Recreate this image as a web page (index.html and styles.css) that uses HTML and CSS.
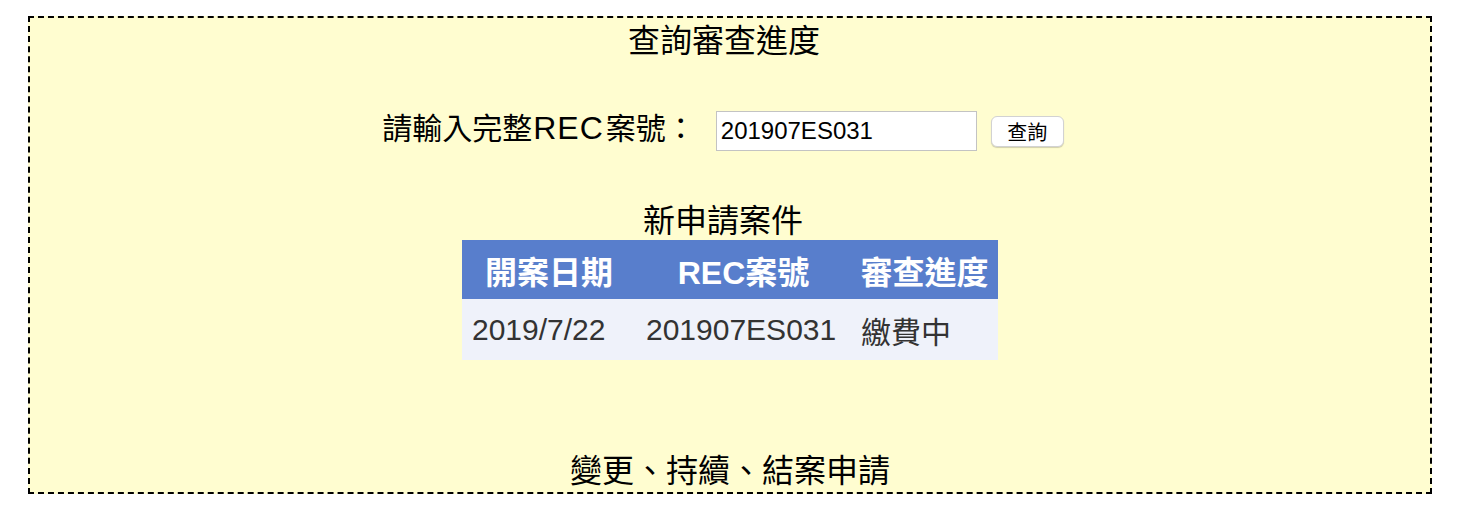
FILE: index.html
```html
<!DOCTYPE html>
<html lang="zh-Hant">
<head>
<meta charset="utf-8">
<title>查詢審查進度</title>
<link rel="stylesheet" href="styles.css">
</head>
<body>
<div class="panel">
  <div class="title">查詢審查進度</div>
  <form class="search-row">
    <label class="search-label" for="rec">請輸入完整<span class="latin">REC</span>案號：</label>
    <input class="search-input" id="rec" type="text" value="201907ES031">
    <button class="search-btn" type="button">查詢</button>
  </form>
  <div class="subtitle">新申請案件</div>
  <table class="cases">
    <colgroup>
      <col class="c-date">
      <col class="c-no">
      <col class="c-status">
    </colgroup>
    <thead>
      <tr><th>開案日期</th><th>REC案號</th><th>審查進度</th></tr>
    </thead>
    <tbody>
      <tr><td>2019/7/22</td><td>201907ES031</td><td>繳費中</td></tr>
    </tbody>
  </table>
  <div class="section-title">變更、持續、結案申請</div>
</div>
</body>
</html>
```

FILE: styles.css
```css
html, body {
  margin: 0;
  padding: 0;
  background: #ffffff;
}

body {
  padding: 16px 30px 0 28px;
  font-family: "Liberation Sans", "Noto Sans CJK TC", sans-serif;
  color: #000;
}

.panel {
  box-sizing: border-box;
  height: 478px;
  border: 2px dashed #000;
  background: #fffdd0;
  display: flex;
  flex-direction: column;
  align-items: center;
}

.title {
  font-size: 32px;
  line-height: 46px;
  padding-right: 12px;
}

.search-row {
  margin: 47px 0 0 0;
  padding-right: 14px;
  display: flex;
  align-items: center;
  height: 40px;
}

.search-label {
  font-size: 30px;
  line-height: 40px;
  margin-bottom: 5px;
  margin-right: 20px;
}

.latin {
  font-size: 32px;
  letter-spacing: 1px;
  margin: 0 2px 0 1px;
}

.search-input {
  box-sizing: border-box;
  width: 261px;
  height: 40px;
  margin: 0;
  padding: 0 4px;
  border: 1px solid #c3c3c3;
  background: #fff;
  font-family: "Liberation Sans", sans-serif;
  font-size: 24px;
  color: #000;
  outline: none;
}

.search-btn {
  box-sizing: border-box;
  width: 73px;
  height: 31px;
  margin: 0 0 0 14px;
  padding: 0;
  border: 1px solid #d2d2d2;
  border-radius: 6px;
  background: #fff;
  box-shadow: 0 1px 1px rgba(0, 0, 0, 0.18);
  font-family: "Noto Sans CJK TC", sans-serif;
  font-size: 20px;
  line-height: 29px;
  color: #000;
}

.subtitle {
  margin-top: 51px;
  font-size: 32px;
  line-height: 38px;
  padding-right: 14px;
}

.cases {
  border-collapse: collapse;
  border-spacing: 0;
  table-layout: fixed;
  width: 536px;
  font-size: 30px;
}

.c-date { width: 174px; }
.c-no { width: 215px; }
.c-status { width: 147px; }

.cases th {
  height: 59px;
  padding: 0 9px;
  background: #587ecc;
  color: #fff;
  font-size: 32px;
  font-weight: bold;
  text-align: center;
  white-space: nowrap;
}

.cases td {
  height: 61px;
  padding: 0 10px;
  background: #eff2fa;
  color: #333;
  text-align: left;
  white-space: nowrap;
}

.section-title {
  margin-top: auto;
  margin-bottom: 1px;
  font-size: 32px;
  line-height: 40px;
}
```
